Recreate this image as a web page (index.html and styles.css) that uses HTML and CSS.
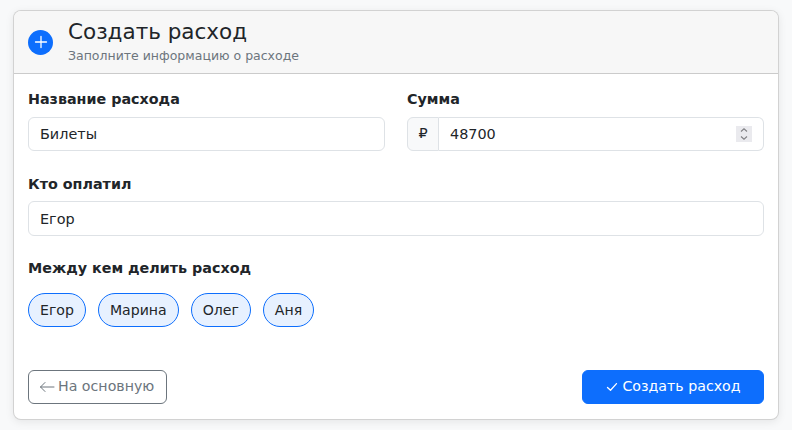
FILE: index.html
```html
<!DOCTYPE html>
<html lang="ru">
<head>
<meta charset="utf-8">
<title>Создать расход</title>
<link rel="stylesheet" href="styles.css">
</head>
<body>
<main class="card">
  <header class="card-header">
    <span class="circle">
      <svg viewBox="0 0 16 16" width="16" height="16"><path d="M8 2.5v11M2.5 8h11" stroke="#fff" stroke-width="1.3" stroke-linecap="round" fill="none"/></svg>
    </span>
    <div class="titles">
      <h1 class="title">Создать расход</h1>
      <p class="subtitle">Заполните информацию о расходе</p>
    </div>
  </header>
  <form class="card-body">
    <div class="row">
      <div class="field">
        <label class="label">Название расхода</label>
        <input class="control" type="text" value="Билеты">
      </div>
      <div class="field">
        <label class="label">Сумма</label>
        <div class="group">
          <span class="addon">₽</span>
          <input class="control control-num" type="number" value="48700">
        </div>
      </div>
    </div>
    <div class="field">
      <label class="label">Кто оплатил</label>
      <input class="control control-payer" type="text" value="Егор">
    </div>
    <div class="field">
      <label class="label">Между кем делить расход</label>
      <div class="chips">
        <span class="chip">Егор</span>
        <span class="chip">Марина</span>
        <span class="chip">Олег</span>
        <span class="chip">Аня</span>
      </div>
    </div>
    <div class="actions">
      <button type="button" class="btn btn-outline">
        <svg class="btn-icon" viewBox="0 0 16 16"><path d="M1.5 8H15M6 3.5 1.5 8 6 12.5" fill="none" stroke="currentColor" stroke-width="1" stroke-linecap="round" stroke-linejoin="round"/></svg>
        <span>На основную</span>
      </button>
      <button type="button" class="btn btn-primary">
        <svg class="btn-icon" viewBox="0 0 16 16"><path d="M2.5 8.5 5.5 11.3 11.5 4.6" fill="none" stroke="currentColor" stroke-width="1.3" stroke-linecap="round" stroke-linejoin="round"/></svg>
        <span>Создать расход</span>
      </button>
    </div>
  </form>
</main>
</body>
</html>
```
FILE: styles.css
```css
* { box-sizing: border-box; }
html, body { height: 100%; }
body {
  margin: 0;
  padding: 10px 13px;
  background: #f8f9fa;
  font-family: "DejaVu Sans", sans-serif;
  font-size: 14.4px;
  line-height: 1.5;
  color: #212529;
}
.card {
  height: 410px;
  background: #fff;
  border: 1px solid rgba(0,0,0,.175);
  border-radius: 8px;
  box-shadow: 0 2px 8px rgba(0,0,0,.08);
  display: flex;
  flex-direction: column;
}
.card-header {
  height: 63px;
  background: #f7f7f7;
  border-bottom: 1px solid rgba(0,0,0,.175);
  border-radius: 7px 7px 0 0;
  padding: 0 14px;
  display: flex;
  align-items: center;
  gap: 15px;
}
.circle {
  width: 25px;
  height: 25px;
  border-radius: 50%;
  background: #0d6efd;
  display: flex;
  align-items: center;
  justify-content: center;
  flex: none;
}
.titles { display: flex; flex-direction: column; }
.title { margin: 0; font-size: 21.5px; font-weight: 400; line-height: 1.2; }
.subtitle { margin: 3px 0 0; font-size: 12.5px; line-height: 18px; color: #6c757d; }
.card-body {
  flex: 1;
  padding: 15px 14px 15px;
  display: flex;
  flex-direction: column;
  gap: 22.6px;
}
.row { display: grid; grid-template-columns: 1fr 1fr; column-gap: 22px; }
.label { display: block; font-weight: 700; font-size: 14.3px; line-height: 21.6px; margin-bottom: 6px; }
.control {
  display: block;
  width: 100%;
  height: 34.4px;
  padding: 0 11px;
  font: inherit;
  font-size: 14.4px;
  color: #212529;
  background: #fff;
  border: 1px solid #dee2e6;
  border-radius: 6px;
  outline: none;
}
.control-payer { padding-top: 1px; }
.group { display: flex; }
.addon {
  width: 32px;
  height: 34.4px;
  display: flex;
  align-items: center;
  justify-content: center;
  background: #f8f9fa;
  border: 1px solid #dee2e6;
  border-radius: 6px 0 0 6px;
  flex: none;
}
.control-num { border-left: 0; border-radius: 0 6px 6px 0; }
.control-num::-webkit-inner-spin-button {
  -webkit-appearance: none;
  appearance: none;
  opacity: 1;
  width: 16px;
  height: 16px;
  background: #eaeaee url("data:image/svg+xml,%3Csvg xmlns='http://www.w3.org/2000/svg' width='16' height='16'%3E%3Cpath d='M5 5.5 8 2.8 11 5.5M5 10.5 8 13.2 11 10.5' fill='none' stroke='%23808084' stroke-width='1.1'/%3E%3C/svg%3E") center no-repeat;
}
.chips { display: flex; gap: 12px; margin-top: 13.4px; }
.chip {
  height: 34px;
  padding: 0 11px;
  display: flex;
  align-items: center;
  font-size: 14.1px;
  background: #e7f1ff;
  border: 1px solid #0d6efd;
  border-radius: 17px;
}
.actions { margin-top: auto; display: flex; justify-content: space-between; }
.btn {
  height: 34px;
  font: inherit;
  font-size: 14.2px;
  border-radius: 6px;
  display: flex;
  align-items: center;
  gap: 3px;
}
.btn-icon { width: 16px; height: 16px; flex: none; }
.btn-outline { background: #fff; border: 1px solid #6c757d; color: #6c757d; padding: 0 12px 0 10px; }
.btn-primary { background: #0d6efd; border: 1px solid #0d6efd; color: #fff; width: 182px; justify-content: center; gap: 1px; }
```
